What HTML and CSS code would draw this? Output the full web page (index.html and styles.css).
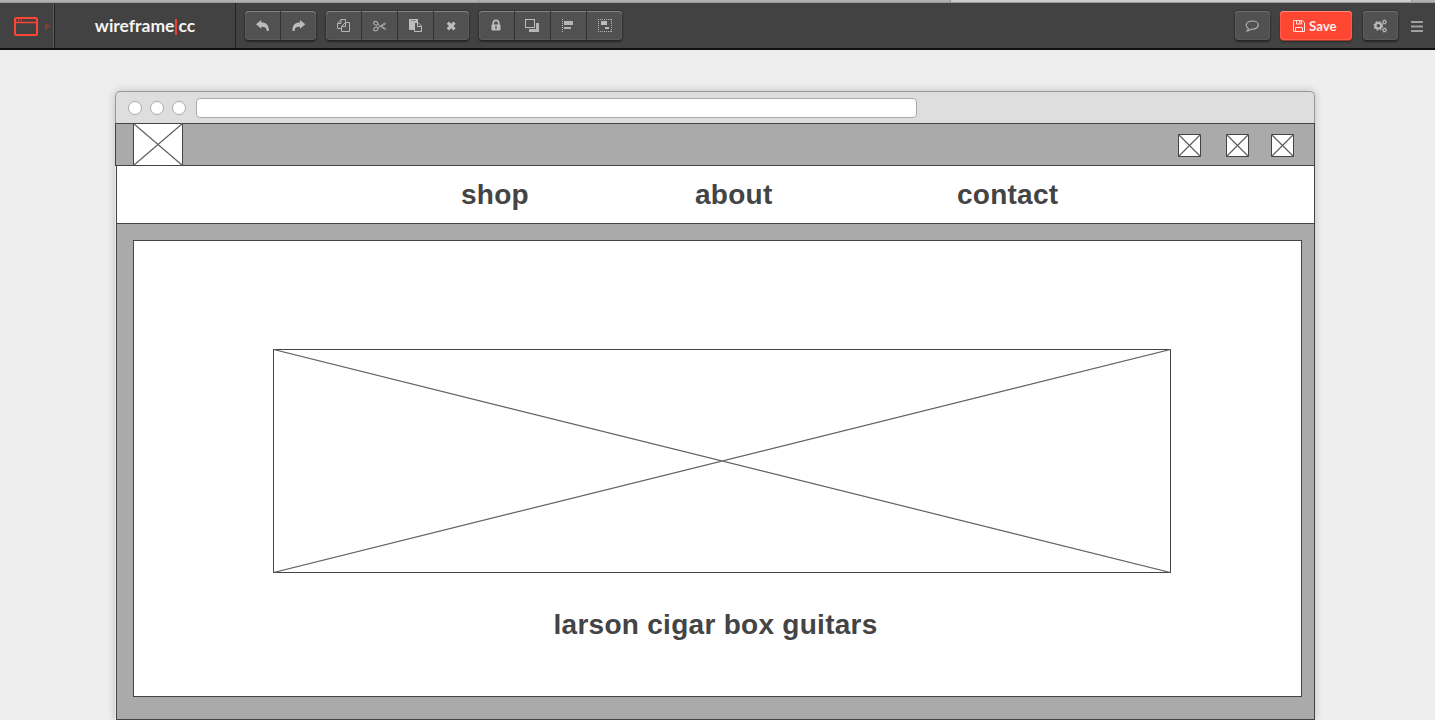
FILE: index.html
```html
<!DOCTYPE html>
<html lang="en">
<head>
<meta charset="utf-8">
<title>wireframe.cc</title>
<link rel="stylesheet" href="styles.css">
</head>
<body>
<div class="tabs"><i class="tab tab-a"></i><i class="tab tab-b"></i><i class="tab tab-active"></i><i class="tab tab-end"></i></div>
<header class="toolbar">
  <div class="device">
    <svg width="24" height="19" viewBox="0 0 24 19" fill="none" stroke="#ff4632"><rect x="1" y="1" width="22" height="17" rx="1.500" stroke-width="2"/><path d="M1 5.500H23" stroke-width="1.500"/><path d="M4.500 2v2.500M7 2v2.500" stroke-width=".8"/></svg>
    <svg class="caret" width="6" height="9" viewBox="0 0 6 9"><path d="M0 .5 5.500 4.500 0 8.500z" fill="#873c36"/></svg>
  </div>
  <div class="brand"><span>wireframe</span><i class="bar"></i><span>cc</span></div>
  <div class="groups">
    <div class="group">
      <button class="btn wide"><svg width="14" height="14" viewBox="0 0 14 14"><path d="M0 5.300 5.300 1v2.600c5 0 7.500 2.300 7.600 8.400h-2.200c0-3-1.500-4.200-5.400-4.200v2z" fill="#bcbcbc"/></svg></button>
      <button class="btn wide"><svg width="14" height="14" viewBox="0 0 14 14"><path d="M13.300 5.300 8 1v2.600C3 3.600.5 5.900.4 12h2.200c0-3 1.500-4.200 5.400-4.200v2z" fill="#bcbcbc"/></svg></button>
    </div>
    <div class="group">
      <button class="btn wide"><svg width="14" height="14" viewBox="0 0 14 14" fill="none" stroke="#b5b5b5"><path d="M4.500 9.500H.5V4.500L4 .5H8.500V3M4 .5V4.500H.5"/><path d="M4.500 7.500 8.500 3.500h4v9H4.500zM8.500 3.500v4H4.500"/></svg></button>
      <button class="btn wide"><svg width="14" height="14" viewBox="0 0 14 14" fill="none" stroke="#a8a8a8" stroke-width="1.200"><ellipse cx="2.800" cy="4.200" rx="2.200" ry="1.700" transform="rotate(25 2.800 4.200)"/><ellipse cx="2.800" cy="10" rx="2.200" ry="1.700" transform="rotate(-25 2.800 10)"/><path d="M4.600 5.300 11.800 10.500l1-.7L7.800 6.700M4.600 9.200 11.800 3.800l1 .8L7.800 7.700" stroke-width="1"/></svg></button>
      <button class="btn wide"><svg width="14" height="14" viewBox="0 0 14 14"><path d="M0 0H9v3.500H5V11H0z" fill="#bcbcbc"/><path d="M2 1.500h5" stroke="#888"/><path d="M5.500 3.500H9L12.500 7V12.500H5.500zM8.500 3.500V7.500H12.500" fill="#555" stroke="#bcbcbc"/></svg></button>
      <button class="btn"><svg width="14" height="14" viewBox="0 0 14 14"><path d="m3.800 3.600 6.800 6.800m0-6.800-6.800 6.800" stroke="#bcbcbc" stroke-width="3.100"/></svg></button>
    </div>
    <div class="group">
      <button class="btn"><svg width="14" height="14" viewBox="0 0 14 14"><path d="M4.200 6V4.200a2.800 2.800 0 0 1 5.600 0V6" fill="none" stroke="#bcbcbc" stroke-width="1.600"/><rect x="2.500" y="5.500" width="9" height="6" rx=".8" fill="#bcbcbc"/><path d="M7 7v3" stroke="#555" stroke-width="1.400"/></svg></button>
      <button class="btn"><svg width="14" height="14" viewBox="0 0 14 14"><path d="M11 4h3v9H4v-3h7z" fill="#b5b5b5"/><rect x=".5" y=".5" width="9" height="8" fill="none" stroke="#bdbdbd"/></svg></button>
      <button class="btn"><svg width="14" height="14" viewBox="0 0 14 14"><path d="M1.500 0v14" stroke="#bcbcbc" stroke-dasharray="1 1"/><path d="M3 2h9v4H3zM3 8h7v2H3z" fill="#b5b5b5"/></svg></button>
      <button class="btn wide"><svg width="14" height="14" viewBox="0 0 14 14"><path d="M0 .5h14M0 12.500h14M.5 0v13M13.500 0v13" stroke="#b0b0b0" stroke-dasharray="1 1"/><path d="M3 2h6v4H3zM7 8h4v2H7z" fill="#bcbcbc"/></svg></button>
    </div>
  </div>
  <div class="actions">
    <button class="btn solo"><svg width="14" height="14" viewBox="0 0 14 14"><path d="M7.200 2c3.500 0 6.100 1.700 6.100 4s-2.600 4.200-6.100 4.200l-1.300-.1c-1 .9-2.400 1.700-3.900 1.800.8-.7 1.300-1.600 1.400-2.400C1.900 8.700 1.100 7.500 1.100 6c0-2.300 2.600-4 6.100-4z" fill="none" stroke="#b8b8b8" stroke-width="1.100"/></svg></button>
    <button class="save"><svg width="12" height="12" viewBox="0 0 12 12" fill="none" stroke="#ffe1dc"><path d="M.5.5h8.800l2.200 2.200v8.800H.5zM2.500 11.500v-4h7v4"/><path d="M3.500.5v3.500h5V.5"/><path d="M6.700 1v2.500" stroke-width="1.500"/></svg><span>Save</span></button>
    <button class="btn solo"><svg width="14" height="14" viewBox="0 0 14 14" fill="none" stroke="#bcbcbc"><circle cx="5.300" cy="6.800" r="2.800" stroke-width="2"/><circle cx="5.300" cy="6.800" r="4.200" stroke-width="1.300" stroke-dasharray="1.650 1.650"/><circle cx="11.500" cy="3" r="1.500" stroke-width="1.200"/><circle cx="11.500" cy="3" r="2.300" stroke-width=".7" stroke-dasharray=".9 .9"/><circle cx="11.500" cy="11" r="1.500" stroke-width="1.200"/><circle cx="11.500" cy="11" r="2.300" stroke-width=".7" stroke-dasharray=".9 .9"/></svg></button>
    <svg class="menu" width="12" height="11" viewBox="0 0 12 11"><path d="M0 1h12M0 5.500h12M0 10h12" stroke="#a0a0a0" stroke-width="1.800"/></svg>
  </div>
</header>
<main class="window">
  <div class="chrome"><i class="dot"></i><i class="dot"></i><i class="dot"></i><div class="address"></div></div>
  <div class="topbar">
    <svg class="logo" width="50" height="43" viewBox="0 0 50 43"><rect x=".5" y=".5" width="49" height="42"/><path d="m.5.5 49 42m0-42-49 42"/></svg>
    <svg class="ph" width="23" height="23" viewBox="0 0 23 23"><rect x=".5" y=".5" width="22" height="22"/><path d="m.5.5 22 22m0-22-22 22"/></svg>
    <svg class="ph second" width="23" height="23" viewBox="0 0 23 23"><rect x=".5" y=".5" width="22" height="22"/><path d="m.5.5 22 22m0-22-22 22"/></svg>
    <svg class="ph third" width="23" height="23" viewBox="0 0 23 23"><rect x=".5" y=".5" width="22" height="22"/><path d="m.5.5 22 22m0-22-22 22"/></svg>
  </div>
  <nav class="nav"><span class="shop">shop</span><span class="about">about</span><span>contact</span></nav>
  <section class="body">
    <div class="card">
      <svg class="hero" width="898" height="224" viewBox="0 0 898 224"><rect x=".5" y=".5" width="897" height="223"/><path d="m.5.5 897 223m0-223-897 223"/></svg>
      <h1 class="title">larson cigar box guitars</h1>
    </div>
  </section>
</main>
</body>
</html>
```
FILE: styles.css
```css
* { box-sizing: border-box; }
body { margin: 0; height: 720px; overflow: hidden; background: #eee; font-family: "Liberation Sans", Arial, sans-serif; }
svg { display: block; flex: none; }
.tabs { display: flex; height: 3px; border-bottom: 1px solid #999; background: #b0b0b0; }
.tab { border-right: 1px solid #929292; }
.tab-a { width: 479px; }
.tab-b { width: 472px; }
.tab-active { width: 461px; background: #cecece; }
.tab-end { flex: 1; border: 0; }
.toolbar { display: flex; height: 47px; background: #424242; border-bottom: 2px solid #111; }
.device { display: flex; width: 55px; padding: 14px 0 0 14px; border-right: 1px solid #222; box-shadow: inset -1px 0 #5c5c5c; }
.caret { margin: 5px 0 0 7px; }
.brand { display: flex; justify-content: center; width: 181px; padding: 12px 0 0; border-right: 1px solid #222; color: #f5f5f5; font: bold 17.5px/22px Lato, sans-serif; }
.bar { width: 2px; height: 16px; margin: 4px 1px 0; background: #f0402f; }
.groups { display: flex; gap: 10px; padding: 8px 0 0 9px; }
.group { display: flex; height: 29px; border-radius: 4px; background: #515151; box-shadow: inset 0 1px #858585, inset 0 0 0 1px #5b5b5b, 0 1px 0 #252525, 0 2px 2px #292929, 0 0 1px 1px #363636; }
.btn { display: flex; width: 36px; height: 29px; margin: 0; padding: 8px 0 0 10px; border: 0; border-right: 1px solid #333; background: none; }
.btn.wide { padding-left: 11px; }
.btn:last-child { border: 0; }
.group .btn:last-child { width: 35px; }
.actions { display: flex; margin-left: auto; padding: 8px 12px 0 0; }
.btn.solo { width: 35px; border: 0; border-radius: 4px; background: #515151; box-shadow: inset 0 1px #707070, inset 0 0 0 1px #5a5a5a, 0 1px 0 #252525, 0 2px 2px #292929, 0 0 1px 1px #363636; }
.save { display: flex; gap: 4px; width: 72px; height: 29px; margin: 0 11px 0 10px; padding: 7px 0 0 13px; border: 0; border-radius: 4px; background: #ff4632; box-shadow: inset 0 1px #ff897c, inset 0 0 0 1px #ff5b49, 0 1px 0 #a33a2f, 0 2px 2px #292929; color: #ffebe8; font: bold 13.3px/16px Lato, sans-serif; }
.save svg { margin-top: 2px; }
.menu { margin: 10px 0 0 13px; }
.window { width: 1200px; margin: 41px 0 0 115px; border-radius: 5px 5px 0 0; box-shadow: 0 0 8px rgba(0, 0, 0, .2); }
.chrome { display: flex; height: 32px; padding: 6px 0 0 12px; border: 1px solid #989898; border-bottom: 0; border-radius: 5px 5px 0 0; background: #dedede; }
.dot { width: 14px; height: 14px; margin: 3px 8px 0 0; border: 1px solid #aaa; border-radius: 50%; background: #fff; }
.address { width: 721px; height: 20px; margin-left: 2px; border: 1px solid #aaa; border-radius: 4px; background: #fff; }
.topbar { display: flex; height: 43px; padding-left: 17px; border: 1px solid #444; background: #aaa; }
.logo, .ph, .hero { fill: #fff; stroke: #444; stroke-width: 1; }
.logo path, .ph path, .hero path { stroke: #606060; stroke-width: 1.2; }
.logo { margin-top: -1px; }
.ph { margin: 10px 0 0 995px; }
.ph.second { margin-left: 25px; }
.ph.third { margin-left: 22px; }
.nav { display: flex; height: 57px; margin-left: 1px; padding: 13px 0 0 344px; border: solid #444; border-width: 0 1px; background: #fff; color: #444; font-size: 28px; font-weight: bold; line-height: 32px; letter-spacing: .25px; }
.shop { width: 234px; }
.about { width: 262px; }
.body { height: 497px; margin-left: 1px; padding: 16px 0 0 16px; border: 1px solid #444; background: #aaa; }
.card { width: 1169px; height: 457px; padding: 108px 0 0 139px; border: 1px solid #444; background: #fff; }
.title { margin: 36px 0 0 280.5px; color: #444; font-size: 28px; line-height: 32px; letter-spacing: .28px; }
```
